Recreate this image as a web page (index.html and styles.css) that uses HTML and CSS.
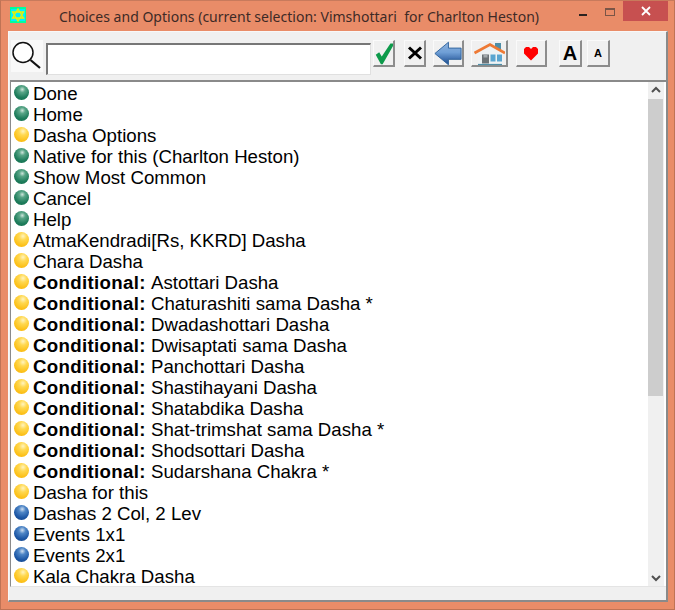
FILE: index.html
```html
<!DOCTYPE html>
<html lang="en">
<head>
<meta charset="utf-8">
<title>Choices and Options</title>
<link rel="stylesheet" href="styles.css">
</head>
<body>
<div class="window">
  <header class="titlebar">
    <svg class="app-icon" width="16" height="16" viewBox="0 0 16 16"><rect width="16" height="16" fill="#00ff9c"/><rect x="1" y="2" width="14" height="12" fill="#00f0ff"/><path d="M8 2 13.500 11H2.500ZM8 14 2.500 5H13.500Z" fill="none" stroke="#f0f000" stroke-width="1.3"/></svg>
    <div class="title">Choices and Options (current selection: Vimshottari&nbsp; for Charlton Heston)</div>
    <div class="controls">
      <span class="minimize"></span>
      <span class="maximize"></span>
      <span class="close"><svg width="10" height="10" viewBox="0 0 10 10"><path d="M1 1 9 9M9 1 1 9" stroke="#fff" stroke-width="1.8"/></svg></span>
    </div>
  </header>
  <main class="client">
    <div class="toolbar">
      <div class="search-icon"><svg width="32" height="32" viewBox="0 0 32 32"><circle cx="12" cy="12.500" r="10" fill="#fff" stroke="#111" stroke-width="1.5"/><path d="M19.500 20 29 28" stroke="#111" stroke-width="2.2"/></svg></div>
      <input class="search" type="text" aria-label="Search">
      <button class="btn btn-ok"><svg width="22" height="26" viewBox="0 0 22 26"><path d="M2 15 6 12 9 17 19 2H22V5L10 26H8Z" fill="#0d9a4b"/></svg></button>
      <button class="btn btn-x"><svg width="16" height="16" viewBox="0 0 16 16"><path d="M2 2.500 14 13.500M14 2.500 2 13.500" stroke="#000" stroke-width="3"/></svg></button>
      <button class="btn btn-back"><svg width="31" height="27" viewBox="0 0 31 27"><defs><linearGradient id="bk" x1="0" y1="0" x2="0" y2="1"><stop offset="0" stop-color="#8fb2dc"/><stop offset=".45" stop-color="#6f9fd6"/><stop offset=".75" stop-color="#3f6fae"/><stop offset="1" stop-color="#1f4f8f"/></linearGradient></defs><path d="M1 13.500 16 1V7.500H30V20H16V26Z" fill="url(#bk)" stroke="#2a5f9a"/></svg></button>
      <button class="btn btn-home"><svg width="32" height="25" viewBox="0 0 32 25"><path d="M22 2h6v7h-6z" fill="#4f8fa8"/><path d="M5 11 17 4 29 11V24H5Z" fill="#eef2f4"/><path d="M1.500 12 17 3.500 32 12" fill="none" stroke="#ee7a35" stroke-width="2.800"/><path d="M9 13.500h7v9H9z" fill="#6b7276"/><path d="M10.500 13.500h4v3h-4z" fill="#a4aaae"/><path d="M17.500 13.500h5v7h-5zM24 13.500h5v7h-5z" fill="#5aa5d0"/><path d="M5 23.500h24" stroke="#4f8fa8" stroke-width="1.200"/></svg></button>
      <button class="btn btn-heart"><svg width="16" height="15" viewBox="0 0 16 15"><path d="M8 14.500 1 7.500V3L3 1H6L8 3 10 1H13L15 3V7.500Z" fill="#f00"/></svg></button>
      <button class="btn btn-big">A</button>
      <button class="btn btn-small">A</button>
    </div>
    <div class="list-frame">
      <ul class="list">
        <li class="row"><span class="ball green"></span>Done</li>
        <li class="row"><span class="ball green"></span>Home</li>
        <li class="row"><span class="ball gold"></span>Dasha Options</li>
        <li class="row"><span class="ball green"></span>Native for this (Charlton Heston)</li>
        <li class="row"><span class="ball green"></span>Show Most Common</li>
        <li class="row"><span class="ball green"></span>Cancel</li>
        <li class="row"><span class="ball green"></span>Help</li>
        <li class="row"><span class="ball gold"></span>AtmaKendradi[Rs, KKRD] Dasha</li>
        <li class="row"><span class="ball gold"></span>Chara Dasha</li>
        <li class="row"><span class="ball gold"></span><b>Conditional:</b>&nbsp;Astottari Dasha</li>
        <li class="row"><span class="ball gold"></span><b>Conditional:</b>&nbsp;Chaturashiti sama Dasha *</li>
        <li class="row"><span class="ball gold"></span><b>Conditional:</b>&nbsp;Dwadashottari Dasha</li>
        <li class="row"><span class="ball gold"></span><b>Conditional:</b>&nbsp;Dwisaptati sama Dasha</li>
        <li class="row"><span class="ball gold"></span><b>Conditional:</b>&nbsp;Panchottari Dasha</li>
        <li class="row"><span class="ball gold"></span><b>Conditional:</b>&nbsp;Shastihayani Dasha</li>
        <li class="row"><span class="ball gold"></span><b>Conditional:</b>&nbsp;Shatabdika Dasha</li>
        <li class="row"><span class="ball gold"></span><b>Conditional:</b>&nbsp;Shat-trimshat sama Dasha *</li>
        <li class="row"><span class="ball gold"></span><b>Conditional:</b>&nbsp;Shodsottari Dasha</li>
        <li class="row"><span class="ball gold"></span><b>Conditional:</b>&nbsp;Sudarshana Chakra *</li>
        <li class="row"><span class="ball gold"></span>Dasha for this</li>
        <li class="row"><span class="ball blue"></span>Dashas 2 Col, 2 Lev</li>
        <li class="row"><span class="ball blue"></span>Events 1x1</li>
        <li class="row"><span class="ball blue"></span>Events 2x1</li>
        <li class="row"><span class="ball gold"></span>Kala Chakra Dasha</li>
      </ul>
      <div class="scrollbar">
        <svg class="arrow" width="16" height="17" viewBox="0 0 16 17"><path d="M4 10 8 6 12 10" fill="none" stroke="#505050" stroke-width="2"/></svg>
        <div class="track"><div class="thumb"></div></div>
        <svg class="arrow" width="16" height="17" viewBox="0 0 16 17"><path d="M4 7 8 11 12 7" fill="none" stroke="#505050" stroke-width="2"/></svg>
      </div>
    </div>
    <div class="statusbar"></div>
  </main>
</div>
</body>
</html>
```
FILE: styles.css
```css
* { box-sizing: border-box; }
html, body { margin: 0; padding: 0; }
body { width: 675px; height: 610px; overflow: hidden; }

.window {
  width: 675px;
  height: 610px;
  display: flex;
  flex-direction: column;
  background: #e98c68;
  border: 1px solid #bf7355;
  border-top-color: #c87a5c;
  padding: 0 6px 7px 7px;
}

.titlebar {
  height: 30px;
  flex: none;
  display: flex;
  align-items: flex-start;
}
.app-icon { margin: 6px 0 0 2px; flex: none; }
.title {
  margin: 6px 0 0 33px;
  font: 14px/20px "Noto Sans", sans-serif;
  letter-spacing: .01px;
  color: #3d2a26;
  white-space: nowrap;
}
.controls {
  margin-left: auto;
  display: flex;
  align-items: flex-start;
}
.minimize { width: 8px; height: 2px; background: #2c2320; margin: 13px 18px 0 0; }
.maximize { width: 10px; height: 8px; border: 1px solid #7a5547; border-top-width: 2px; margin: 7px 8px 0 0; }
.close {
  width: 45px;
  height: 20px;
  background: #c75050;
  display: flex;
  align-items: center;
  justify-content: center;
}

.client {
  flex: 1;
  min-height: 0;
  display: flex;
  flex-direction: column;
  background: #f0f0f0;
  border-top: 1px solid #f8f8f8;
  border-left: 1px solid #f8f8f8;
  border-right: 2px solid #8a8a8a;
  border-bottom: 2px solid #8a8a8a;
}

.toolbar {
  height: 48px;
  flex: none;
  display: flex;
  align-items: flex-start;
  padding: 8px 0 0 2px;
}
.search-icon { width: 32px; height: 32px; background: #f9f9f9; flex: none; }
.search {
  width: 325px;
  height: 32px;
  margin: 3px 2px 0 3px;
  padding: 0;
  flex: none;
  background: #fff;
  border: 1px solid #e0e0e0;
  border-top: 2px solid #777;
  border-left: 2px solid #777;
  border-radius: 0;
  outline: none;
}
.btn {
  height: 27px;
  padding: 0;
  flex: none;
  display: flex;
  align-items: center;
  justify-content: center;
  background: #f0f0f0;
  border: 1px solid #fafafa;
  border-right: 2px solid #8c8c8c;
  border-bottom: 2px solid #8c8c8c;
  border-radius: 0;
  overflow: visible;
  font-family: "Liberation Sans", sans-serif;
  font-weight: bold;
  color: #000;
}
.btn-ok { width: 22px; margin-right: 9px; }
.btn-x { width: 22px; margin-right: 7px; }
.btn-back { width: 31px; margin-right: 7px; }
.btn-home { width: 37px; margin-right: 8px; }
.btn-heart { width: 31px; margin-right: 12px; }
.btn-big { width: 23px; margin-right: 5px; font-size: 20px; }
.btn-small { width: 23px; font-size: 11px; }

.list-frame {
  height: 507px;
  flex: none;
  margin-left: 1px;
  display: flex;
  background: #fff;
  border-top: 2px solid #8a8a8a;
  border-left: 1px solid #8a8a8a;
  border-bottom: 1px solid #e4e4e4;
  padding-right: 2px;
}
.list {
  flex: 1;
  min-width: 0;
  margin: 0;
  padding: 0 0 0 3px;
  list-style: none;
}
.row {
  height: 21px;
  padding-top: 2px;
  display: flex;
  align-items: center;
  font: 18.67px/19px "Liberation Sans", sans-serif;
  color: #000;
  white-space: pre;
}
.row b { font-weight: bold; letter-spacing: .33px; }
.ball {
  width: 15px;
  height: 15px;
  border-radius: 50%;
  margin: -2px 4px 0 0;
  flex: none;
}
.green { background: radial-gradient(circle at 55% 30%, #cfe6dc 0, #5aa688 22%, #1f7d5c 60%, #0f6a4a 100%); }
.gold { background: radial-gradient(circle at 60% 28%, #fff4c0 0, #ffd850 28%, #fcc21c 65%, #f5ae0a 100%); }
.blue { background: radial-gradient(circle at 55% 28%, #d0dff0 0, #4f86c6 25%, #1e58a6 62%, #123f80 100%); }

.scrollbar {
  width: 16px;
  flex: none;
  display: flex;
  flex-direction: column;
  background: #f0f0f0;
}
.arrow { flex: none; display: block; }
.track { flex: 1; min-height: 0; }
.thumb { height: 297px; margin-right: 1px; background: #cdcdcd; }

.statusbar { flex: 1; min-height: 0; background: #f0f0f0; }
```
